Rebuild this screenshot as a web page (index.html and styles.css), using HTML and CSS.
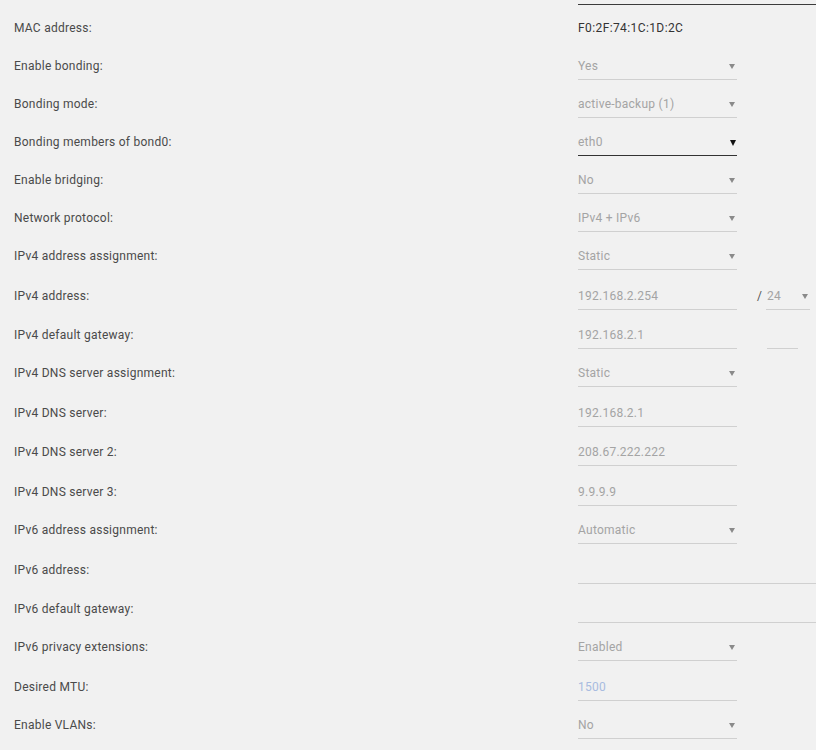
FILE: index.html
```html
<!DOCTYPE html>
<html lang="en">
<head>
    <meta charset="UTF-8">
    <meta name="viewport" content="width=device-width, initial-scale=1.0">
    <title>Network settings</title>
    <link rel="stylesheet" href="styles.css">
</head>
<body>
    <div class="settings">
        <div class="prev-line"></div>

        <div class="row row-static">
            <div class="label">MAC address:</div>
            <div class="value">F0:2F:74:1C:1D:2C</div>
        </div>
        <div class="row">
            <div class="label">Enable bonding:</div>
            <div class="field select">Yes</div>
        </div>
        <div class="row">
            <div class="label">Bonding mode:</div>
            <div class="field select">active-backup (1)</div>
        </div>
        <div class="row">
            <div class="label">Bonding members of bond0:</div>
            <div class="field select active">eth0</div>
        </div>
        <div class="row">
            <div class="label">Enable bridging:</div>
            <div class="field select">No</div>
        </div>
        <div class="row">
            <div class="label">Network protocol:</div>
            <div class="field select">IPv4 + IPv6</div>
        </div>
        <div class="row">
            <div class="label">IPv4 address assignment:</div>
            <div class="field select">Static</div>
        </div>
        <div class="row row-input">
            <div class="label">IPv4 address:</div>
            <div class="field">192.168.2.254</div>
            <span class="slash">/</span>
            <div class="field select prefix">24</div>
        </div>
        <div class="row row-input">
            <div class="label">IPv4 default gateway:</div>
            <div class="field">192.168.2.1</div>
            <div class="field prefix-empty"></div>
        </div>
        <div class="row">
            <div class="label">IPv4 DNS server assignment:</div>
            <div class="field select">Static</div>
        </div>
        <div class="row row-input">
            <div class="label">IPv4 DNS server:</div>
            <div class="field">192.168.2.1</div>
        </div>
        <div class="row row-input">
            <div class="label">IPv4 DNS server 2:</div>
            <div class="field">208.67.222.222</div>
        </div>
        <div class="row row-input">
            <div class="label">IPv4 DNS server 3:</div>
            <div class="field">9.9.9.9</div>
        </div>
        <div class="row">
            <div class="label">IPv6 address assignment:</div>
            <div class="field select">Automatic</div>
        </div>
        <div class="row row-input">
            <div class="label">IPv6 address:</div>
            <div class="field wide"></div>
        </div>
        <div class="row row-input">
            <div class="label">IPv6 default gateway:</div>
            <div class="field wide"></div>
        </div>
        <div class="row">
            <div class="label">IPv6 privacy extensions:</div>
            <div class="field select">Enabled</div>
        </div>
        <div class="row row-input">
            <div class="label">Desired MTU:</div>
            <div class="field mtu">1500</div>
        </div>
        <div class="row">
            <div class="label">Enable VLANs:</div>
            <div class="field select">No</div>
        </div>
    </div>
</body>
</html>
```

FILE: styles.css
```css
body {
    margin: 0;
    background-color: #f1f1f1;
    font-family: Roboto, "Liberation Sans", sans-serif;
    font-size: 12px;
    letter-spacing: 0.25px;
    color: #4a4a4a;
    overflow: hidden;
}
.settings {
    padding-left: 14px;
}
.prev-line {
    margin-left: 564px;
    height: 4px;
    border-bottom: 1px solid #3c3c3c;
}
.row {
    display: flex;
    align-items: flex-end;
    height: 38px;
}
.row-static {
    height: 37px;
}
.row-input {
    height: 39.6px;
}
.label {
    width: 564px;
    flex-shrink: 0;
    line-height: 26px;
    padding-bottom: 1px;
}
.value {
    line-height: 26px;
    padding-bottom: 1px;
    color: #333;
    letter-spacing: 0.4px;
}
.field {
    position: relative;
    box-sizing: border-box;
    width: 159px;
    flex-shrink: 0;
    height: 27px;
    line-height: 26px;
    border-bottom: 1px solid #d0d0d0;
    color: #a4a4a4;
}
.field.wide {
    width: 238px;
}
.field.mtu {
    color: #a8bbe0;
}
.select::after {
    content: "";
    position: absolute;
    right: 2px;
    top: 11px;
    border-left: 3px solid transparent;
    border-right: 3px solid transparent;
    border-top: 5px solid #8a8a8a;
}
.select.active {
    border-bottom-color: #333;
}
.select.active::after {
    right: 1px;
    border-left-width: 3px;
    border-right-width: 3px;
    border-top: 6px solid #111;
}
.slash {
    margin-left: 20px;
    width: 9px;
    line-height: 26px;
    padding-bottom: 1px;
    color: #555;
}
.field.prefix {
    width: 44px;
    padding-left: 1px;
}
.field.prefix-empty {
    width: 31px;
    margin-left: 30px;
}
```
